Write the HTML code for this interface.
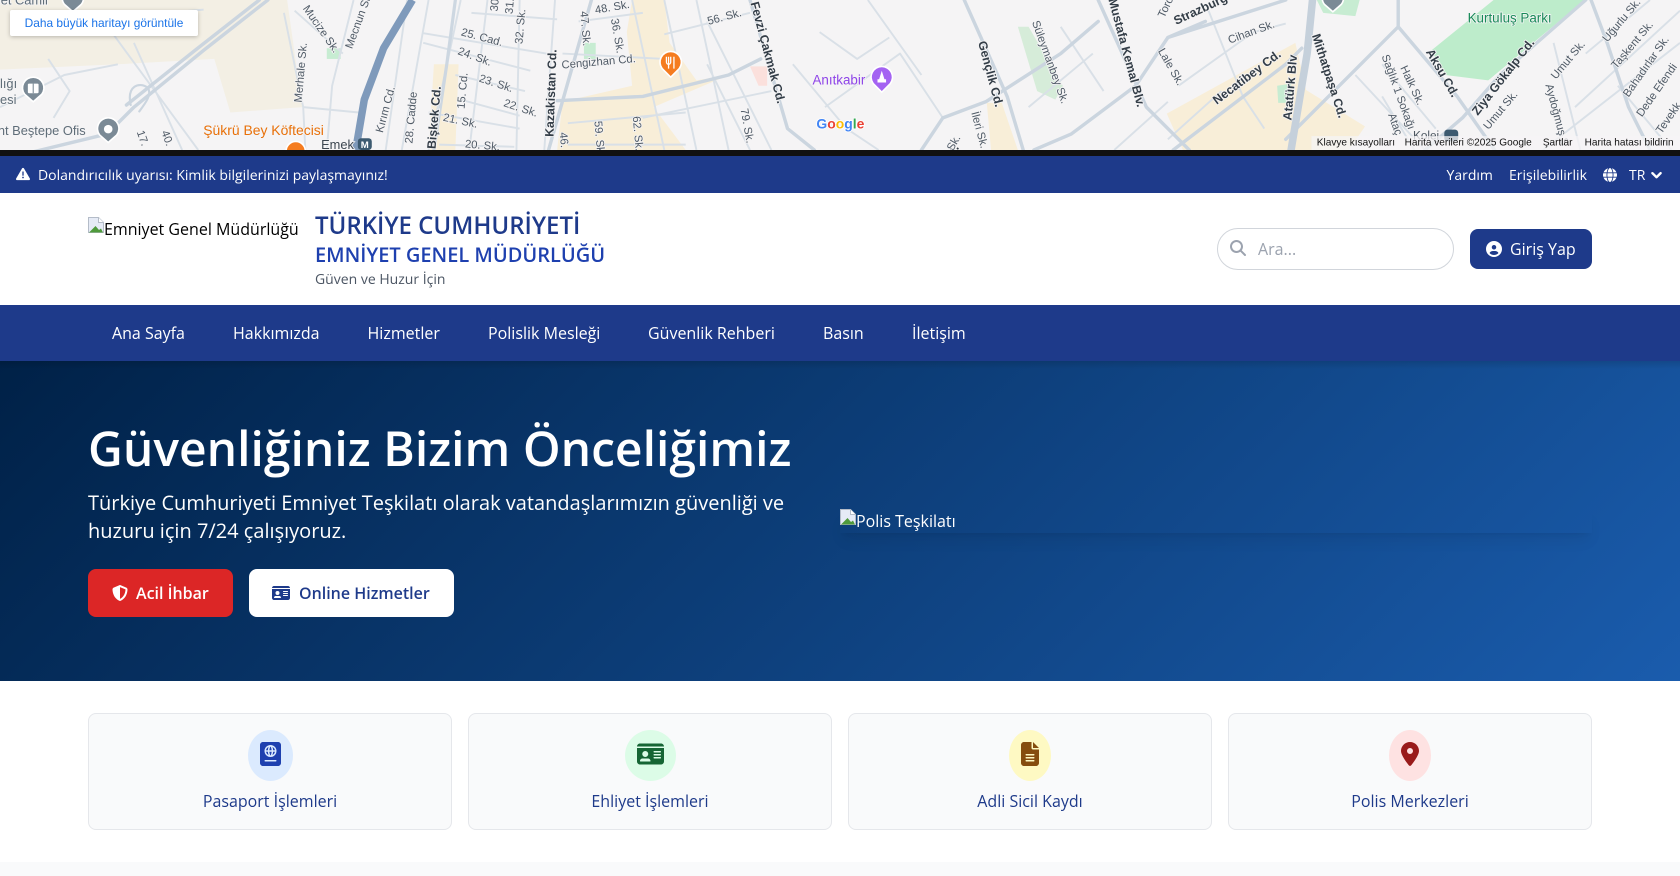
<!DOCTYPE html>
<html lang="tr">
<head>
<meta charset="utf-8">
<title>Emniyet Genel Müdürlüğü</title>
<style>
html,body{margin:0;padding:0;background:#fff}
body{width:1680px;height:876px;position:relative;overflow:hidden;font-family:"Open Sans","Noto Sans","Liberation Sans","Noto Sans CJK JP",sans-serif;color:#000}
.a{position:absolute;white-space:nowrap;line-height:1}
svg{display:block}
.ic{position:absolute;fill:currentColor}
.card{position:absolute;top:713px;width:362px;height:115px;background:#f9fafb;border:1px solid #e5e7eb;border-radius:8px}
.oval{position:absolute;top:730px;height:51px;border-radius:50%}
.lab{position:absolute;top:790px;width:364px;text-align:center;font-size:16px;line-height:22px;color:#1e3a8a}
.nav{position:absolute;top:322px;font-size:16px;line-height:22px;color:#fff}
#map text{font-family:"Liberation Sans",Arial,sans-serif;font-size:10.5px;fill:#4f5a66;text-anchor:middle;paint-order:stroke;stroke:#f5f4f5;stroke-width:1.5px}
#map text.b{font-weight:bold;fill:#333d47;font-size:11.5px}
</style>
</head>
<body>
<!-- MAP -->
<svg id="map" class="a" style="left:0;top:0" width="1680" height="150" viewBox="0 0 1568 140" preserveAspectRatio="none">
<rect width="1568" height="140" fill="#f5f4f5"/>
<polygon points="0,0 268,0 282,100 215,105 200,55 110,60 0,65" fill="#f3efe4"/>
<polygon points="405,60 428,60 425,140 400,140" fill="#f8eed8"/>
<polygon points="590,0 620,0 625,40 650,75 680,70 610,100 640,140 520,140 525,95 590,80 585,30" fill="#f8eed8"/>
<polygon points="1089,106 1209,40 1219,84 1274,118 1259,140 1104,140" fill="#f8eed8"/>
<polygon points="921,96 935,96 950,140 925,140" fill="#f8eed8"/>
<polygon points="1394,0 1479,0 1389,75 1349,70 1336,47" fill="#bdeccb"/>
<polygon points="1192,80 1205,78 1205,96 1193,96" fill="#c7ecd2"/>
<polygon points="950,25 960,25 992,80 985,93 968,85" fill="#d6ecd9"/>
<polygon points="1229,0 1269,0 1265,15 1235,12" fill="#c7ecd2"/>
<polygon points="545,40 556,40 556,55 545,55" fill="#c7ecd2"/>
<polygon points="305,45 318,45 318,55 305,55" fill="#c7ecd2"/>
<polygon points="700,62 716,62 716,80 708,80" fill="#fbe0dc"/>
<g fill="none" stroke="#d9e0e7" stroke-width="1.800" stroke-linejoin="round">
<path d="M75,19 190,9M105,31 185,140M125,40 170,140M265,12 283,100 285,140M275,10 320,50M330,0 310,80 305,140M283,100 335,105M430,0 400,140M455,0 438,140M485,0 482,140M518,0 508,140M590,0 620,140M620,0 650,140M650,0 680,140M660,60 700,140M395,31 510,50M395,40 495,66M425,70 490,85M430,93 485,108M400,105 485,120M410,135 480,137M525,50 620,55M620,32 700,12M600,110 720,85M530,115 640,105M530,135 640,135M380,0 360,140M400,0 375,140M0,100 60,70 110,60M45,55 65,85 50,110M540,20 600,12M440,12 520,18M660,20 720,140"/>
<path d="M765,30 800,55 830,35M740,60 790,120 820,140M810,0 860,70M770,100 840,50 880,110M1128,10 1160,90 1180,120M1100,80 1170,30 1200,22M1020,50 960,100M990,25 1030,85M1265,70 1330,140M1290,60 1340,120M1290,90 1320,140M1568,40 1440,140M1568,10 1470,100M1540,0 1480,50M1450,40 1475,140M1510,80 1560,140M1090,130 1140,85M1040,140 1090,95"/>
</g>
<g fill="none" stroke="#cbd5df" stroke-width="3.200" stroke-linejoin="round" stroke-linecap="round">
<path d="M250,0 190,47 125,100 100,125 30,142M242,0 182,47 118,98"/>
<path d="M122,98C118,80 130,76 138,82 142,88 136,96 130,104" stroke-width="2"/>
<path d="M552,0 512,140M520,94 600,90 680,70 710,55M700,0 735,120 760,140M900,0 940,90 955,140M860,140 880,110 920,95 990,50 1025,20M1125,20 1090,35 1060,80 1000,125 965,140M1025,0 1070,100 1110,140M1090,35 1200,0M1095,140 1200,60 1215,45M1305,0 1305,25 1360,90 1395,140M1480,0 1400,70 1365,110 1330,140M1305,25 1240,90 1200,130M1485,0 1500,40 1520,100 1540,140"/>
<path d="M1225,0 1220,50 1205,140" stroke-width="7" stroke="#c5d0db"/>
<path d="M425,0 417,60 405,140" stroke-width="3" stroke="#cdd7e1"/>
</g>
<path d="M385,0 358,45 340,93 332,140" fill="none" stroke="#7f9abb" stroke-width="7"/>
<text style="fill:#5f6d78;font-size:12px;text-anchor:start" x="-2" y="4">iet Camii</text>
<text transform="translate(297,29) rotate(55)">Mucize Sk.</text>
<text transform="translate(338,20) rotate(-70)">Mecnun Sk.</text>
<text transform="translate(284,68) rotate(-85)">Merhale Sk.</text>
<text transform="translate(363,103) rotate(-75)">Kırım Cd.</text>
<text transform="translate(387,110) rotate(-85)">28. Cadde</text>
<text class="b" transform="translate(409,110) rotate(-85)">Bişkek Cd.</text>
<text transform="translate(435,85) rotate(-85)">15. Cd.</text>
<text transform="translate(449,38) rotate(15)">25. Cad.</text>
<text transform="translate(442,56) rotate(20)">24. Sk.</text>
<text transform="translate(462,81) rotate(18)">23. Sk.</text>
<text transform="translate(485,104) rotate(18)">22. Sk.</text>
<text transform="translate(429,116) rotate(12)">21. Sk.</text>
<text transform="translate(450,139) rotate(5)">20. Sk.</text>
<text class="b" transform="translate(518,87) rotate(-88)">Kazakistan Cd.</text>
<text transform="translate(559,61) rotate(-5)">Cengizhan Cd.</text>
<text transform="translate(543,27) rotate(85)">47. Sk.</text>
<text transform="translate(573,34) rotate(80)">36. Sk.</text>
<text transform="translate(572,10) rotate(-10)">48. Sk.</text>
<text transform="translate(489,25) rotate(-85)">32. Sk.</text>
<text transform="translate(479,6) rotate(-85)">31.</text>
<text transform="translate(465,5) rotate(-85)">30</text>
<text transform="translate(677,19) rotate(-15)">56. Sk.</text>
<text class="b" transform="translate(713,50) rotate(75)">Fevzi Çakmak Cd.</text>
<text transform="translate(694,118) rotate(80)">79. Sk.</text>
<text transform="translate(592,125) rotate(85)">62. Sk.</text>
<text transform="translate(556,128) rotate(85)">59. Sk</text>
<text transform="translate(523,131) rotate(85)">46.</text>
<text transform="translate(130,130) rotate(70)">17.</text>
<text transform="translate(153,130) rotate(70)">40.</text>
<text style="fill:#e8710a;font-size:13px" x="246" y="126">Şükrü Bey Köftecisi</text>
<text style="fill:#3c4650;font-size:12px" x="315" y="139">Emek</text>
<rect x="334" y="129" width="13" height="11" rx="3" fill="#3c5a70"/>
<text style="fill:#fff;stroke:none;font-size:9px;font-weight:bold" x="340.500" y="138">M</text>
<text style="fill:#5f6d78;font-size:12px;text-anchor:start" x="-2" y="126">nt Beştepe Ofis</text>
<text style="fill:#5f6d78;font-size:12px;text-anchor:start" x="0" y="82">lığı</text>
<text style="fill:#5f6d78;font-size:12px;text-anchor:start" x="0" y="97">esi</text>
<g fill="#7b8a96" stroke="#fff" stroke-width="1.500">
<path d="M101,110a10,10 0 0 1 8,16l-8,7l-8,-7a10,10 0 0 1 8,-16z"/>
<path d="M31,72a10,10 0 0 1 8,16l-8,7l-8,-7a10,10 0 0 1 8,-16z"/>
<path d="M68,-12a10,10 0 0 1 8,16l-8,7l-8,-7a10,10 0 0 1 8,-16z"/>
<path d="M1244,-12a10,10 0 0 1 8,16l-8,7l-8,-7a10,10 0 0 1 8,-16z"/>
</g>
<circle cx="101" cy="120.500" r="4" fill="#fff"/>
<rect x="26" y="78" width="10" height="9" rx="1" fill="#fff"/>
<rect x="30.500" y="78" width="1" height="9" fill="#7b8a96"/>
<path d="M626,48a10,10 0 0 1 8,16l-8,8l-8,-8a10,10 0 0 1 8,-16z" fill="#f57c1f" stroke="#fff" stroke-width="1.500"/>
<path d="M622,53v5a2,2 0 0 0 4,0v-5M624,53v11M629,53v11" fill="none" stroke="#fff" stroke-width="1.200"/>
<circle cx="276" cy="141" r="9" fill="#f57c1f" stroke="#fff" stroke-width="1.500"/>
<text style="fill:#8e44e8;font-size:12.500px" x="783" y="79">Anıtkabir</text>
<path d="M823,62a10,10 0 0 1 8,16l-8,8l-8,-8a10,10 0 0 1 8,-16z" fill="#a463f2" stroke="#fff" stroke-width="1.500"/>
<path d="M823,66l2.500,8h1.500v3h-8v-3h1.500z" fill="#fff"/>
<text transform="translate(901,128) rotate(-60)" class="b" x="-30" y="0">niz Cd.</text>
<text transform="translate(911,122) rotate(75)">İleri Sk.</text>
<text transform="translate(893,135) rotate(-60)">Sk.</text>
<text style="font-size:13px;font-weight:bold;stroke:#fff;stroke-width:1.500px;paint-order:stroke;text-anchor:start" x="762" y="120"><tspan style="fill:#4285f4">G</tspan><tspan style="fill:#ea4335">o</tspan><tspan style="fill:#fbbc05">o</tspan><tspan style="fill:#4285f4">g</tspan><tspan style="fill:#34a853">l</tspan><tspan style="fill:#ea4335">e</tspan></text>
<text class="b" transform="translate(921,70) rotate(75)">Gençlik Cd.</text>
<text transform="translate(977,59) rotate(70)">Süleymanbey Sk.</text>
<text class="b" transform="translate(1048,50) rotate(75)">Mustafa Kemal Blv.</text>
<text transform="translate(1091,8) rotate(-65)">Toro</text>
<text class="b" transform="translate(1122,12) rotate(-25)">Strazburg</text>
<text transform="translate(1169,33) rotate(-20)">Cihan Sk.</text>
<text transform="translate(1090,64) rotate(60)">Lale Sk.</text>
<text class="b" transform="translate(1166,75) rotate(-37)">Necatibey Cd.</text>
<text class="b" transform="translate(1208,82) rotate(-85)">Atatürk Blv</text>
<text class="b" transform="translate(1237,72) rotate(72)">Mithatpaşa Cd.</text>
<text style="fill:#178a58;font-size:12.500px" x="1409" y="21">Kurtuluş Parkı</text>
<text class="b" transform="translate(1343,70) rotate(60)">Aksu Cd.</text>
<text class="b" transform="translate(1406,74) rotate(-52)">Ziya Gökalp Cd.</text>
<text transform="translate(1302,87) rotate(70)">Sağlık 1 Sokağı</text>
<text transform="translate(1315,81) rotate(65)">Halk Sk.</text>
<text transform="translate(1299,117) rotate(70)">Ataç</text>
<text transform="translate(1466,58) rotate(-50)">Umut Sk.</text>
<text transform="translate(1403,105) rotate(-50)">Umut Sk.</text>
<text transform="translate(1450,108) rotate(75)">Aydoğmuş S</text>
<text transform="translate(1516,21) rotate(-50)">Uğurlu Sk.</text>
<text transform="translate(1526,44) rotate(-50)">Taşkent Sk.</text>
<text transform="translate(1539,64) rotate(-55)">Bahadırlar Sk.</text>
<text transform="translate(1549,86) rotate(-55)">Dede Efendi</text>
<text transform="translate(1560,112) rotate(-55)">Tevekk</text>
<text style="fill:#4b5660;font-size:11px" x="1331" y="130">Kolej</text>
<rect x="1348" y="121" width="13" height="11" rx="3" fill="#3c5a70"/>
<rect x="1224" y="127" width="344" height="13" fill="#f5f4f5" opacity=".75"/>
<text style="fill:#111;stroke:none;font-size:9.400px;text-anchor:start" x="1229" y="136">Klavye kısayolları</text>
<text style="fill:#111;stroke:none;font-size:9.400px;text-anchor:start" x="1311" y="136">Harita verileri ©2025 Google</text>
<text style="fill:#111;stroke:none;font-size:9.400px;text-anchor:start" x="1440" y="136">Şartlar</text>
<text style="fill:#111;stroke:none;font-size:9.400px;text-anchor:start" x="1479" y="136">Harita hatası bildirin</text>
</svg>
<div class="a" style="left:10px;top:10px;width:188px;height:26px;background:#fff;border-radius:2px;box-shadow:0 1px 4px rgba(0,0,0,.25);font:11.900px/26px 'Liberation Sans',sans-serif;color:#1a73e8;text-align:center">Daha büyük haritayı görüntüle</div>
<div class="a" style="left:0;top:150px;width:1680px;height:6px;background:#111"></div>

<!-- TOP BAR -->
<div class="a" style="left:0;top:156px;width:1680px;height:37px;background:#1e3a8a"></div>
<svg class="ic" style="left:16px;top:167px;color:#fff" width="14" height="14" viewBox="0 0 512 512"><path d="M256 32c14.200 0 27.300 7.500 34.500 19.800l216 368c7.300 12.400 7.300 27.700 .2 40.100S486.300 480 472 480H40c-14.300 0-27.600-7.700-34.700-20.100s-7-27.800 .2-40.100l216-368C228.700 39.500 241.800 32 256 32zm0 128c-13.300 0-24 10.700-24 24V296c0 13.300 10.700 24 24 24s24-10.700 24-24V184c0-13.300-10.700-24-24-24zm32 224a32 32 0 1 0 -64 0 32 32 0 1 0 64 0z"/></svg>
<div class="a" style="left:38px;top:166px;font-size:14px;line-height:20px;color:#fff">Dolandırıcılık uyarısı: Kimlik bilgilerinizi paylaşmayınız!</div>
<div class="a" style="left:1446.500px;top:166px;font-size:14px;line-height:20px;color:#fff">Yardım</div>
<div class="a" style="left:1509px;top:166px;font-size:14px;line-height:20px;color:#fff">Erişilebilirlik</div>
<svg class="ic" style="left:1603px;top:168px;color:#fff" width="14" height="14" viewBox="0 0 512 512"><path d="M352 256c0 22.200-1.200 43.600-3.300 64H163.300c-2.200-20.400-3.300-41.800-3.300-64s1.200-43.600 3.300-64H348.700c2.200 20.400 3.300 41.800 3.300 64zm28.800-64H503.900c5.300 20.500 8.100 41.900 8.100 64s-2.800 43.500-8.100 64H380.800c2.100-20.600 3.200-42 3.200-64s-1.100-43.400-3.200-64zm112.600-32H376.700c-10-63.900-29.800-117.400-55.300-151.600c78.300 20.700 142 77.500 171.900 151.600zm-149.100 0H167.700c6.100-36.400 15.500-68.600 27-94.700c10.500-23.600 22.200-40.700 33.500-51.500C239.400 3.200 248.700 0 256 0s16.600 3.200 27.800 13.800c11.300 10.800 23 27.900 33.500 51.500c11.600 26 20.900 58.200 27 94.700zm-209 0H18.600C48.600 85.900 112.200 29.100 190.600 8.400C165.100 42.600 145.300 96.100 135.300 160zM8.100 192H131.200c-2.100 20.600-3.200 42-3.200 64s1.100 43.400 3.200 64H8.100C2.800 299.500 0 278.100 0 256s2.800-43.500 8.100-64zM194.700 446.600c-11.600-26-20.900-58.200-27-94.600H344.300c-6.100 36.400-15.500 68.600-27 94.600c-10.500 23.600-22.200 40.700-33.500 51.500C272.600 508.800 263.300 512 256 512s-16.600-3.200-27.800-13.800c-11.300-10.800-23-27.900-33.500-51.500zM135.300 352c10 63.900 29.800 117.400 55.300 151.600C112.200 482.900 48.600 426.100 18.600 352H135.300zm358.100 0c-30 74.100-93.600 130.900-171.900 151.600c25.500-34.200 45.200-87.700 55.300-151.600H493.400z"/></svg>
<div class="a" style="left:1629px;top:166px;font-size:14px;line-height:20px;color:#fff">TR</div>
<svg class="ic" style="left:1651px;top:169px;color:#fff;stroke:#fff;stroke-width:45" width="11" height="11" viewBox="0 0 512 512"><path d="M233.400 406.600c12.500 12.500 32.800 12.500 45.300 0l192-192c12.500-12.500 12.500-32.800 0-45.300s-32.800-12.500-45.300 0L256 338.700 86.600 169.400c-12.500-12.500-32.800-12.500-45.300 0s-12.500 32.800 0 45.300l192 192z"/></svg>

<!-- HEADER -->
<svg class="a" style="left:88px;top:217px" width="16" height="16" viewBox="0 0 16 16"><path d="M.5,.5H10.500L15.500,5.500V15.500H.5Z" fill="#e6ebf6" stroke="#b4bcc8"/><path d="M10.500,.5V5.500H15.500" fill="#fff" stroke="#b4bcc8"/><path d="M1,15.500L7.500,9L11,13L13,11.500L15,15.500Z" fill="#4f9a3c"/></svg>
<div class="a" style="left:104px;top:218px;font-size:16px;line-height:22px;color:#000">Emniyet Genel Müdürlüğü</div>
<div class="a" style="left:315px;top:210px;font-size:24px;line-height:32px;font-weight:600;color:#1e3a8a">TÜRKİYE CUMHURİYETİ</div>
<div class="a" style="left:315px;top:241px;font-size:20px;line-height:28px;font-weight:600;color:#1e40af">EMNİYET GENEL MÜDÜRLÜĞÜ</div>
<div class="a" style="left:315px;top:270px;font-size:14px;line-height:20px;color:#4b5563">Güven ve Huzur İçin</div>
<div class="a" style="left:1217px;top:228px;width:235px;height:40px;border:1px solid #d1d5db;border-radius:21px;background:#fff"></div>
<svg class="ic" style="left:1230px;top:240px;color:#9ca3af" width="16" height="16" viewBox="0 0 512 512"><path d="M416 208c0 45.900-14.900 88.300-40 122.700L502.600 457.400c12.500 12.500 12.500 32.800 0 45.300s-32.800 12.500-45.300 0L330.700 376c-34.400 25.200-76.800 40-122.700 40C93.100 416 0 322.900 0 208S93.100 0 208 0S416 93.100 416 208zM208 352a144 144 0 1 0 0-288 144 144 0 1 0 0 288z"/></svg>
<div class="a" style="left:1258px;top:238px;font-size:16px;line-height:22px;color:#9ca3af">Ara...</div>
<div class="a" style="left:1470px;top:229px;width:122px;height:40px;background:#1e3a8a;border-radius:8px"></div>
<svg class="ic" style="left:1486px;top:241px;color:#fff" width="16" height="16" viewBox="0 0 512 512"><path d="M399 384.200C376.900 345.800 335.400 320 288 320H224c-47.400 0-88.900 25.800-111 64.200c35.200 39.200 86.200 63.800 143 63.800s107.800-24.700 143-63.800zM0 256a256 256 0 1 1 512 0A256 256 0 1 1 0 256zm256 16a72 72 0 1 0 0-144 72 72 0 1 0 0 144z"/></svg>
<div class="a" style="left:1510px;top:238px;font-size:16px;line-height:22px;color:#fff">Giriş Yap</div>

<!-- NAV -->
<div class="a" style="left:0;top:305px;width:1680px;height:56px;background:#1e3a8a"></div>
<div class="nav a" style="left:112px">Ana Sayfa</div>
<div class="nav a" style="left:233px">Hakkımızda</div>
<div class="nav a" style="left:367.500px">Hizmetler</div>
<div class="nav a" style="left:488px">Polislik Mesleği</div>
<div class="nav a" style="left:648px">Güvenlik Rehberi</div>
<div class="nav a" style="left:823px">Basın</div>
<div class="nav a" style="left:912px">İletişim</div>

<!-- HERO -->
<div class="a" style="left:0;top:361px;width:1680px;height:320px;background:linear-gradient(135deg,#002147 0%,#1a5cad 100%);overflow:hidden">
  <div style="position:absolute;left:0;top:0;width:1680px;height:8px;background:linear-gradient(rgba(0,0,0,.12),rgba(0,0,0,0))"></div>
  <div style="position:absolute;left:840px;top:148px;width:752px;height:24px;box-shadow:0 10px 15px -3px rgba(0,0,0,.07),0 4px 6px -4px rgba(0,0,0,.07)"></div>
</div>
<div class="a" style="left:88px;top:415px;font-size:48px;line-height:68px;font-weight:600;color:#fff">Güvenliğiniz Bizim Önceliğimiz</div>
<div class="a" style="left:88px;top:489px;font-size:20px;line-height:28px;color:#fff">Türkiye Cumhuriyeti Emniyet Teşkilatı olarak vatandaşlarımızın güvenliği ve<br>huzuru için 7/24 çalışıyoruz.</div>
<div class="a" style="left:88px;top:569px;width:145px;height:48px;background:#dc2626;border-radius:8px"></div>
<svg class="ic" style="left:112px;top:585px;color:#fff" width="16" height="16" viewBox="0 0 512 512"><path d="M256 0c4.600 0 9.200 1 13.400 2.900L457.700 82.800c22 9.300 38.400 31 38.300 57.200c-.5 99.200-41.300 280.700-213.600 363.200c-16.700 8-36.100 8-52.800 0C57.300 420.700 16.500 239.200 16 140c-.1-26.200 16.300-47.900 38.300-57.200L242.700 2.900C246.800 1 251.400 0 256 0zm0 66.800V444.800C394 378 431.100 230.100 432 141.400L256 66.800l0 0z"/></svg>
<div class="a" style="left:136px;top:582px;font-size:16px;line-height:22px;font-weight:600;color:#fff">Acil İhbar</div>
<div class="a" style="left:249px;top:569px;width:205px;height:48px;background:#fff;border-radius:8px"></div>
<svg class="ic" style="left:272px;top:585px;color:#1e3a8a" width="18" height="16" viewBox="0 0 576 512"><path d="M0 96l576 0c0-35.300-28.700-64-64-64H64C28.700 32 0 60.700 0 96zm0 32V416c0 35.300 28.700 64 64 64H512c35.300 0 64-28.700 64-64V128H0zM64 405.300c0-29.500 23.900-53.300 53.300-53.300H234.700c29.500 0 53.300 23.900 53.300 53.300c0 5.900-4.800 10.700-10.700 10.700H74.700c-5.900 0-10.700-4.800-10.700-10.700zM176 192a64 64 0 1 1 0 128 64 64 0 1 1 0-128zm176 16c0-8.800 7.200-16 16-16H496c8.800 0 16 7.200 16 16s-7.200 16-16 16H368c-8.800 0-16-7.200-16-16zm0 64c0-8.800 7.200-16 16-16H496c8.800 0 16 7.200 16 16s-7.200 16-16 16H368c-8.800 0-16-7.200-16-16zm0 64c0-8.800 7.200-16 16-16H496c8.800 0 16 7.200 16 16s-7.200 16-16 16H368c-8.800 0-16-7.200-16-16z"/></svg>
<div class="a" style="left:299px;top:582px;font-size:16px;line-height:22px;font-weight:600;color:#1e3a8a">Online Hizmetler</div>
<svg class="a" style="left:840px;top:509px" width="16" height="16" viewBox="0 0 16 16"><path d="M.5,.5H10.500L15.500,5.500V15.500H.5Z" fill="#e6ebf6" stroke="#b4bcc8"/><path d="M10.500,.5V5.500H15.500" fill="#fff" stroke="#b4bcc8"/><path d="M1,15.500L7.500,9L11,13L13,11.500L15,15.500Z" fill="#4f9a3c"/></svg>
<div class="a" style="left:856px;top:510px;font-size:16px;line-height:22px;color:#fff">Polis Teşkilatı</div>

<!-- CARDS -->
<div class="card" style="left:88px"></div>
<div class="card" style="left:468px"></div>
<div class="card" style="left:848px"></div>
<div class="card" style="left:1228px"></div>
<div class="oval" style="left:248px;width:45px;background:#dbeafe"></div>
<div class="oval" style="left:625px;width:51px;background:#dcfce7"></div>
<div class="oval" style="left:1009px;width:42px;background:#fef9c3"></div>
<div class="oval" style="left:1389px;width:42px;background:#fee2e2"></div>
<svg class="ic" style="left:260px;top:742px;color:#1e40af" width="21" height="24" viewBox="0 0 448 512"><path d="M0 64C0 28.700 28.700 0 64 0H384c35.300 0 64 28.700 64 64V448c0 35.300-28.700 64-64 64H64c-35.300 0-64-28.700-64-64V64zM183 278.800c-27.900-13.200-48.400-39.400-53.700-70.800h39.100c1.600 30.400 7.700 53.800 14.600 70.800zm41.300 9.200l-.3 0-.3 0c-2.400-3.500-5.700-8.900-9.100-16.500c-6-13.600-12.400-34.300-14.200-63.500h47.100c-1.800 29.200-8.100 49.900-14.200 63.500c-3.400 7.600-6.700 13-9.100 16.500zm40.700-9.200c6.800-17.100 12.900-40.400 14.600-70.800h39.100c-5.300 31.400-25.800 57.600-53.700 70.800zM279.600 176c-1.600-30.400-7.700-53.800-14.600-70.800c27.900 13.200 48.400 39.400 53.700 70.800H279.600zM223.700 96l.3 0 .3 0c2.400 3.500 5.700 8.900 9.100 16.500c6 13.600 12.400 34.300 14.200 63.500H200.500c1.800-29.200 8.100-49.900 14.200-63.500c3.400-7.600 6.700-13 9.100-16.500zM183 105.200c-6.800 17.100-12.900 40.400-14.600 70.800H129.300c5.300-31.400 25.800-57.600 53.700-70.800zM352 192A128 128 0 1 0 96 192a128 128 0 1 0 256 0zM112 384c-8.800 0-16 7.200-16 16s7.200 16 16 16H336c8.800 0 16-7.200 16-16s-7.200-16-16-16H112z"/></svg>
<svg class="ic" style="left:637px;top:742px;color:#166534" width="27" height="24" viewBox="0 0 576 512"><path d="M0 96l576 0c0-35.300-28.700-64-64-64H64C28.700 32 0 60.700 0 96zm0 32V416c0 35.300 28.700 64 64 64H512c35.300 0 64-28.700 64-64V128H0zM64 405.300c0-29.500 23.900-53.300 53.300-53.300H234.700c29.500 0 53.300 23.900 53.300 53.300c0 5.900-4.800 10.700-10.700 10.700H74.700c-5.900 0-10.700-4.800-10.700-10.700zM176 192a64 64 0 1 1 0 128 64 64 0 1 1 0-128zm176 16c0-8.800 7.200-16 16-16H496c8.800 0 16 7.200 16 16s-7.200 16-16 16H368c-8.800 0-16-7.200-16-16zm0 64c0-8.800 7.200-16 16-16H496c8.800 0 16 7.200 16 16s-7.200 16-16 16H368c-8.800 0-16-7.200-16-16zm0 64c0-8.800 7.200-16 16-16H496c8.800 0 16 7.200 16 16s-7.200 16-16 16H368c-8.800 0-16-7.200-16-16z"/></svg>
<svg class="ic" style="left:1021px;top:742px;color:#854d0e" width="18" height="24" viewBox="0 0 384 512"><path d="M64 0C28.700 0 0 28.700 0 64V448c0 35.300 28.700 64 64 64H320c35.300 0 64-28.700 64-64V160H256c-17.700 0-32-14.300-32-32V0H64zM256 0V128H384L256 0zM112 256H272c8.800 0 16 7.200 16 16s-7.200 16-16 16H112c-8.800 0-16-7.200-16-16s7.200-16 16-16zm0 64H272c8.800 0 16 7.200 16 16s-7.200 16-16 16H112c-8.800 0-16-7.200-16-16s7.200-16 16-16zm0 64H272c8.800 0 16 7.200 16 16s-7.200 16-16 16H112c-8.800 0-16-7.200-16-16s7.200-16 16-16z"/></svg>
<svg class="ic" style="left:1401px;top:742px;color:#991b1b" width="18" height="24" viewBox="0 0 384 512"><path d="M215.700 499.200C267 435 384 279.400 384 192C384 86 298 0 192 0S0 86 0 192c0 87.400 117 243 168.300 307.200c12.300 15.300 35.100 15.300 47.400 0zM192 128a64 64 0 1 1 0 128 64 64 0 1 1 0-128z"/></svg>
<div class="lab" style="left:88px">Pasaport İşlemleri</div>
<div class="lab" style="left:468px">Ehliyet İşlemleri</div>
<div class="lab" style="left:848px">Adli Sicil Kaydı</div>
<div class="lab" style="left:1228px">Polis Merkezleri</div>

<div class="a" style="left:0;top:862px;width:1680px;height:14px;background:#f9fafb"></div>
</body>
</html>
